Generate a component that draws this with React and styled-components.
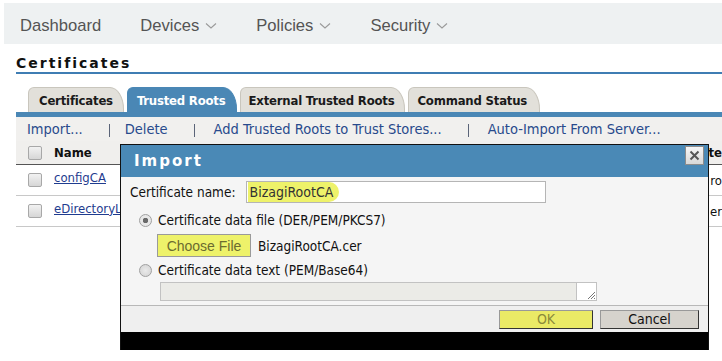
import React from 'react';
import styled, { createGlobalStyle } from 'styled-components';

const Global = createGlobalStyle`
  html, body { margin: 0; padding: 0; background: #fff; }
  body { width: 722px; height: 361px; overflow: hidden; }
`;

const ui = `"DejaVu Sans Condensed", "DejaVu Sans", Tahoma, sans-serif`;

const Page = styled.div`
  position: relative;
  width: 722px;
  height: 361px;
  font-family: ${ui};
`;

// top navigation
const NavBar = styled.div`
  margin: 3px 0 0 4px;
  height: 41px;
  box-sizing: border-box;
  padding: 5px 0 0 16px;
  background: #eef1f2;
  display: flex;
  align-items: center;
  gap: 39px;
  font-family: "Liberation Sans", Arial, sans-serif;
  font-size: 16.6px;
  color: #545454;
`;

const NavItem = styled.div`
  display: flex;
  align-items: center;
  gap: 6px;
`;

const Chevron = () => (
  <svg width="12" height="8" viewBox="0 0 12 8">
    <path d="M1 1.5 L6 6 L11 1.5" fill="none" stroke="#9a9a9a" strokeWidth="1.1" />
  </svg>
);

const Heading = styled.div`
  margin: 0 0 0 16px;
  padding: 11px 0 1px;
  border-bottom: 2px solid #3f7db3;
  font-family: "DejaVu Sans", Verdana, sans-serif;
  font-weight: bold;
  font-size: 14px;
  letter-spacing: 2px;
  color: #111;
`;

const Tabs = styled.div`
  display: flex;
  gap: 3px;
  margin: 13px 0 0 28px;
  height: 25px;
  align-items: flex-end;
`;

const Tab = styled.div`
  height: 24px;
  padding: 0 ${p => p.$pr}px 0 ${p => p.$pl}px;
  display: flex;
  align-items: center;
  font-size: 13px;
  font-weight: bold;
  border-radius: 6px 14px 0 0 / 6px 22px 0 0;
  background: ${p => (p.$active ? '#4a87b5' : '#e2e0da')};
  color: ${p => (p.$active ? '#fff' : '#1a1a1a')};
  border: 1px solid ${p => (p.$active ? '#4a87b5' : '#c9c6bd')};
  border-bottom: none;
  letter-spacing: -0.2px;
`;

const BlueStrip = styled.div`
  margin-left: 16px;
  height: 5px;
  background: #4a87b5;
`;

const Toolbar = styled.div`
  margin-left: 16px;
  height: 24px;
  background: #f1f0ee;
  display: flex;
  align-items: center;
  padding-left: 11px;
  font-size: 14.5px;
  color: #284a8c;
`;

const ToolLink = styled.span`
  white-space: nowrap;
`;

// thin divider between toolbar links
const Sep = styled.span`
  width: 1px;
  height: 13px;
  margin-top: 2px;
  background: #5b6478;
  margin-left: ${p => p.$l}px;
  margin-right: ${p => p.$r}px;
`;

const Table = styled.div`
  margin-left: 16px;
  font-size: 13px;
`;

const HeadRow = styled.div`
  height: 23px;
  background: #f0efed;
  border-bottom: 1px solid #555;
  display: flex;
  align-items: center;
  padding-left: 12px;
  gap: 12px;
  font-weight: bold;
  color: #111;
`;

const Row = styled.div`
  height: 30px;
  border-bottom: 1px solid #c8c8c8;
  display: flex;
  align-items: center;
  padding-left: 12px;
  gap: 12px;
`;

const RowLink = styled.a`
  color: #1f3c8f;
  text-decoration: underline;
  margin-top: -6px;
`;

const RightCell = styled.span`
  margin-left: auto;
  color: #111;
  font-weight: ${p => (p.$bold ? 'bold' : 'normal')};
`;

const Check = styled.span`
  width: 12px;
  height: 12px;
  border: 1px solid #a8a8a8;
  border-radius: 2px;
  background: linear-gradient(#f2f2f2, #d6d6d6);
  flex: none;
`;

// dialog
const Dialog = styled.div`
  position: absolute;
  left: 120px;
  top: 141px;
  width: 587px;
  height: 205px;
  border: 1px solid #111;
  border-bottom: none;
  background: #f5f5f5;
  display: flex;
  flex-direction: column;
  font-size: 13.5px;
  color: #111;
`;

const TitleBar = styled.div`
  height: 32px;
  flex: none;
  background: #4a89b6;
  display: flex;
  align-items: center;
  justify-content: space-between;
  padding: 0 4px 0 13px;
  color: #fff;
  font-family: "DejaVu Sans", Verdana, sans-serif;
  font-weight: bold;
  font-size: 15px;
  letter-spacing: 2px;
`;

const CloseBtn = styled.div`
  width: 17px;
  height: 17px;
  margin-top: -12px;
  background: linear-gradient(#f6f6f6, #d8d8d8);
  border: 1px solid #8c8c8c;
  display: flex;
  align-items: center;
  justify-content: center;
`;

const Body = styled.div`
  flex: 1;
  padding: 4px 0 0 9px;
  display: flex;
  flex-direction: column;
`;

const FieldRow = styled.div`
  display: flex;
  align-items: center;
  gap: 10px;
  height: 22px;
`;

const NameInput = styled.div`
  width: 297px;
  height: 20px;
  border: 1px solid #b5b5b5;
  background: #fff;
  display: flex;
  align-items: center;
  padding-left: 1px;
`;

const Marker = styled.span`
  background: #eef26a;
  font-size: 14px;
  padding: 2px 6px 2px 2px;
  border-radius: 0 10px 10px 0;
  color: #333;
`;

const RadioRow = styled.div`
  display: flex;
  align-items: center;
  gap: 6px;
  padding-left: 9px;
  height: 20px;
  margin-top: ${p => p.$mt}px;
`;

const Radio = styled.span`
  width: 11px;
  height: 11px;
  border-radius: 50%;
  border: 1px solid #a0a0a0;
  background: radial-gradient(circle, ${p => (p.$on ? '#6a6a6a 0 2.5px, #e8e8e8 3px' : '#eaeaea 0, #d2d2d2 100%')});
  flex: none;
`;

const FileRow = styled.div`
  display: flex;
  align-items: center;
  gap: 7px;
  padding-left: 27px;
  margin-top: 4px;
  height: 23px;
`;

const FileBtn = styled.div`
  width: 92px;
  height: 21px;
  border: 1px solid #9a9a9a;
  background: #eef26a;
  display: flex;
  align-items: center;
  justify-content: center;
  color: #6b6b30;
  font-family: "Liberation Sans", Arial, sans-serif;
  font-size: 14px;
`;

const TextBox = styled.div`
  position: relative;
  margin: 2px 0 0 30px;
  width: 435px;
  height: 17px;
  border: 1px solid #c2c2c2;
  background: #ebebe7;
`;

const Grip = styled.div`
  position: absolute;
  right: 0;
  top: 0;
  width: 19px;
  height: 17px;
  background: #fff;
  border-left: 1px solid #c2c2c2;
  display: flex;
  align-items: flex-end;
  justify-content: flex-end;
`;

const Footer = styled.div`
  height: 26px;
  flex: none;
  border-top: 1px solid #b8b8b8;
  background: #efefef;
  display: flex;
  align-items: center;
  justify-content: flex-end;
  gap: 7px;
  padding-right: 9px;
`;

const Btn = styled.div`
  width: ${p => p.$w}px;
  height: 17px;
  display: flex;
  align-items: center;
  justify-content: center;
  background: ${p => (p.$hl ? '#eaea66' : '#d6d3cd')};
  color: ${p => (p.$hl ? '#8b8b3a' : '#111')};
  border: 1px solid #999;
  border-right-color: #333;
  border-bottom-color: #333;
  font-size: 14px;
`;

const BlackBand = styled.div`
  height: 18px;
  flex: none;
  background: #000;
`;

export default function App() {
  return (
    <Page>
      <Global />
      <NavBar>
        <NavItem>Dashboard</NavItem>
        <NavItem>Devices <Chevron /></NavItem>
        <NavItem>Policies <Chevron /></NavItem>
        <NavItem>Security <Chevron /></NavItem>
      </NavBar>

      <Heading>Certificates</Heading>

      <Tabs>
        <Tab $pl={10} $pr={10}>Certificates</Tab>
        <Tab $active $pl={9} $pr={10}>Trusted Roots</Tab>
        <Tab $pl={8} $pr={10}>External Trusted Roots</Tab>
        <Tab $pl={8} $pr={12}>Command Status</Tab>
      </Tabs>
      <BlueStrip />

      <Toolbar>
        <ToolLink>Import...</ToolLink>
        <Sep $l={26} $r={15} />
        <ToolLink>Delete</ToolLink>
        <Sep $l={26} $r={19} />
        <ToolLink>Add Trusted Roots to Trust Stores...</ToolLink>
        <Sep $l={26} $r={19} />
        <ToolLink>Auto-Import From Server...</ToolLink>
      </Toolbar>

      <Table>
        <HeadRow>
          <Check />
          <span>Name</span>
          <RightCell $bold>ate</RightCell>
        </HeadRow>
        <Row>
          <Check />
          <RowLink>configCA</RowLink>
          <RightCell>ro</RightCell>
        </Row>
        <Row>
          <Check />
          <RowLink>eDirectoryLocalCA</RowLink>
          <RightCell>er</RightCell>
        </Row>
      </Table>

      <Dialog>
        <TitleBar>
          <span>Import</span>
          <CloseBtn>
            <svg width="11" height="11" viewBox="0 0 11 11">
              <path d="M1.5 1.5 L9.5 9.5 M9.5 1.5 L1.5 9.5" stroke="#555" strokeWidth="2" />
            </svg>
          </CloseBtn>
        </TitleBar>
        <Body>
          <FieldRow>
            <span>Certificate name:</span>
            <NameInput><Marker>BizagiRootCA</Marker></NameInput>
          </FieldRow>
          <RadioRow $mt={7}>
            <Radio $on />
            <span>Certificate data file (DER/PEM/PKCS7)</span>
          </RadioRow>
          <FileRow>
            <FileBtn>Choose File</FileBtn>
            <span>BizagiRootCA.cer</span>
          </FileRow>
          <RadioRow $mt={3}>
            <Radio />
            <span>Certificate data text (PEM/Base64)</span>
          </RadioRow>
          <TextBox>
            <Grip>
              <svg width="10" height="10" viewBox="0 0 10 10">
                <path d="M9 2 L2 9 M9 5 L5 9 M9 8 L8 9" stroke="#777" strokeWidth="1" />
              </svg>
            </Grip>
          </TextBox>
        </Body>
        <Footer>
          <Btn $hl $w={92}>OK</Btn>
          <Btn $w={97}>Cancel</Btn>
        </Footer>
        <BlackBand />
      </Dialog>
    </Page>
  );
}
